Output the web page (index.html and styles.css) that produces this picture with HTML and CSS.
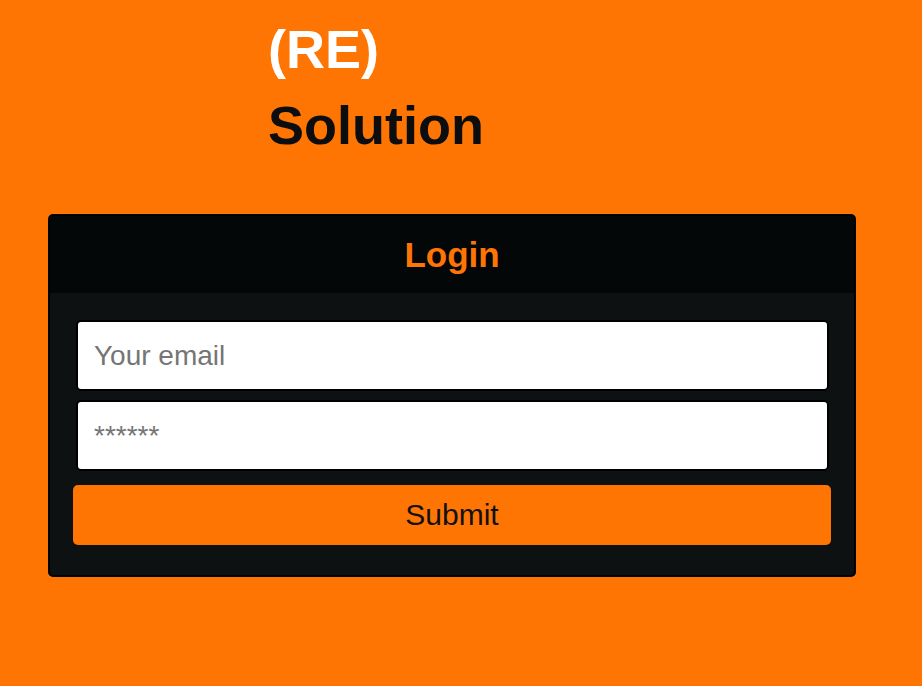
FILE: index.html
```html
<!DOCTYPE html>
<html>
<head>
<meta charset="utf-8">
<link rel="stylesheet" href="styles.css">
</head>
<body>
<div class="page">
  <h1 class="title"><span class="re">(RE)</span><span class="sol">Solution</span></h1>
  <div class="card">
    <div class="card-head">Login</div>
    <div class="card-body">
      <input class="field" type="text" placeholder="Your email">
      <input class="field" type="password" placeholder="******">
      <button class="submit">Submit</button>
    </div>
  </div>
</div>
</body>
</html>
```
FILE: styles.css
```css
html, body { margin: 0; padding: 0; }
body {
  background: #ff7504;
  font-family: "Liberation Sans", Arial, sans-serif;
  width: 922px;
  height: 686px;
  overflow: hidden;
}
.page { padding: 11px 0 0 48px; }
.title {
  margin: 0 0 0 220px;
  font-size: 54px;
  font-weight: bold;
  line-height: 76px;
  display: flex;
  flex-direction: column;
}
.re { color: #ffffff; }
.sol { color: #0b0d0e; }
.card {
  margin-top: 51px;
  width: 804px;
  border: 2px solid #000;
  border-radius: 5px;
  overflow: hidden;
  background: #0d1112;
}
.card-head {
  background: #030708;
  height: 77px;
  display: flex;
  align-items: center;
  justify-content: center;
  color: #ff7504;
  font-weight: bold;
  font-size: 35px;
}
.card-body {
  padding: 27px 23px 30px 23px;
  display: flex;
  flex-direction: column;
}
.field {
  box-sizing: border-box;
  margin: 0 2px 9px 3px;
  height: 71px;
  border: 2px solid #000;
  border-radius: 5px;
  background: #fff;
  font-family: "Liberation Sans", Arial, sans-serif;
  font-size: 28px;
  padding: 0 16px;
  outline: none;
}
.field::placeholder { color: #757575; }
.submit {
  margin-top: 5px;
  height: 60px;
  border: none;
  border-radius: 5px;
  background: #ff7504;
  color: #111;
  font-family: "Liberation Sans", Arial, sans-serif;
  font-size: 30px;
}
```
